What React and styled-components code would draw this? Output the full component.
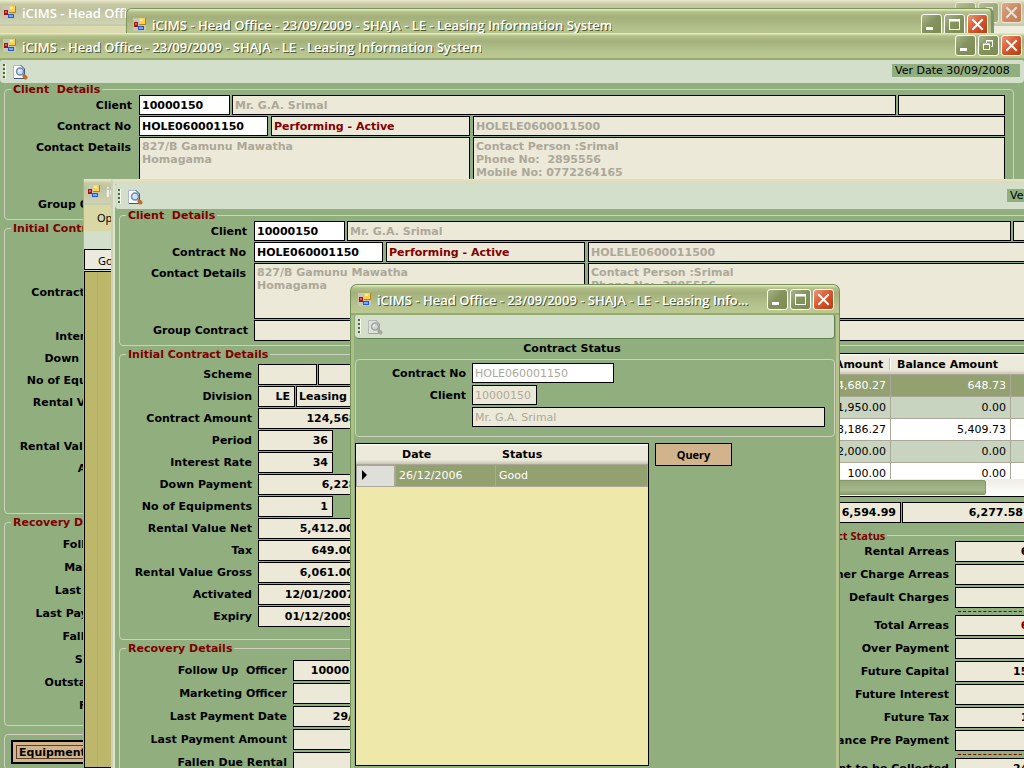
import React, { useId } from 'react';
import styled, { createGlobalStyle, css } from 'styled-components';

const wide = '"DejaVu Sans", Verdana, sans-serif';
const caption = '"Open Sans", "Trebuchet MS", sans-serif';
const narrow = '"Noto Sans", Tahoma, sans-serif';
const green = '#91ae7f';
const cream = '#ece9d8';
const line = '#d0d0bf';

const GlobalStyle = createGlobalStyle`
  *, *::before, *::after { box-sizing: border-box; }
  body { margin: 0; background: ${green}; font: 11px/13px ${wide}; color: #000; }
  input, textarea, button, table { font: inherit; color: inherit; }
`;

const Desktop = styled.div`
  position: relative;
  height: 100vh;
  overflow: hidden;
`;

/* Windows on the desktop */
const Window = styled.section`
  position: absolute;
  display: flex;
  flex-direction: column;
  left: ${(p) => p.$x}px;
  top: ${(p) => p.$y}px;
  width: ${(p) => p.$w || '100%'};
  bottom: 0;
  background: ${(p) => p.$bg || green};
`;

const BackWindow = styled(Window)`
  background: linear-gradient(90deg, #dad8aa, #efeede);
`;

const PopWindow = styled(Window)`
  width: auto;
  right: 30px;
  overflow: hidden;
  border-radius: 6px 6px 0 0;
  border: 1px solid #80955c;
  border-right: 3px solid #7d9466;
`;

const MenuWindow = styled(Window)`
  border-left: 1px solid #a9b38b;
`;

const InnerWindow = styled(Window)`
  border-left: 2px solid #c9d1b4;
  border-top: 2px solid #e0e1c3;

  &::before {
    content: '';
    height: 3px;
    flex: none;
    background: #dcdcbd;
  }
`;

const InnerBody = styled.div`
  display: flex;
  flex-direction: column;
  border-left: 2px solid #dee3cc;
`;

const DialogWindow = styled(Window)`
  border-radius: 7px 7px 0 0;
  overflow: hidden;
  border: 1px solid #74905a;
  border-bottom: 0;
`;

const DialogBody = styled.div`
  flex: 1;
  min-height: 0;
  display: flex;
  flex-direction: column;
  border-left: 3px solid #adc084;
  border-right: 3px solid #b5c48a;
  padding: 0 1px 2px 1px;
`;

const TitleBar = styled.header`
  flex: none;
  display: flex;
  align-items: center;
  height: ${(p) => p.$h || 27}px;
  padding: 0 ${(p) => p.$pr || 2}px 0 ${(p) => p.$pl || 3}px;
  gap: 6px;
  border-bottom: 2px solid #95ab70;
  background: linear-gradient(#e9f1c6 0, #b3c088 3px, #a3b07c 8px, #b4c28d 70%, #bcc992 100%);
  ${(p) =>
    p.$faded &&
    css`
      border-bottom-color: #c5cbab;
      background: linear-gradient(#ebebce 0, #c8c9a4 4px, #bfc3a1 9px, #d0d3b3 100%);
    `}
  > svg { flex: none; }
`;

const Title = styled.h1`
  flex: 0 1 auto;
  min-width: 0;
  max-width: ${(p) => (p.$cut ? `${p.$cut}px` : 'none')};
  margin: 0 8px 0 0;
  padding-top: 2px;
  overflow: hidden;
  white-space: nowrap;
  text-overflow: ${(p) => (p.$cut ? 'clip' : 'ellipsis')};
  font: 600 13px/20px ${caption};
  color: #fff;
  text-shadow: ${(p) => (p.$faded ? 'none' : '1px 1px 0 #4f5a2c')};
`;

const Controls = styled.div`
  display: flex;
  gap: 2px;
  margin-left: auto;
  opacity: ${(p) => (p.$faded ? 0.55 : 1)};
`;

const ControlButton = styled.button`
  width: 21px;
  height: 21px;
  padding: 0;
  border: 1px solid #fff;
  border-radius: 3px;
  background: ${(p) =>
    p.$close
      ? 'linear-gradient(135deg, #e8987a, #d8542c 50%, #b83c10)'
      : 'linear-gradient(135deg, #a9b58c, #84945f 45%, #7d8b50)'};

  svg { display: block; }
`;

const Toolbar = styled.div`
  flex: none;
  display: flex;
  align-items: center;
  gap: 5px;
  height: ${(p) => p.$h || 23}px;
  padding: 0 4px 0 3px;
  background: #d3dfcb;
  border-radius: 2px 2px 4px 4px;
  ${(p) => p.$shadow && 'border-bottom: 1px solid #5f8050; border-right: 1px solid #5f8050;'}
`;

const Grip = styled.span`
  width: 3px;
  height: 15px;
  background: repeating-linear-gradient(#4b6b3c 0 2px, transparent 2px 4px);
  border-right: 1px solid #f4f8f0;
`;

const ToolButton = styled.button`
  width: 18px;
  height: 18px;
  padding: 1px;
  border: 0;
  background: none;
  svg { display: block; }
`;

const Version = styled.output`
  width: 128px;
  margin: 0 0 3px auto;
  padding: 0 3px;
  white-space: nowrap;
  background: ${green};
`;

/* Form parts */
const Form = styled.form`
  display: flex;
  flex-direction: column;
  gap: 2px;
  padding: 0 10px 0 4px;
  background: ${green};
`;

const Group = styled.fieldset`
  min-width: 0;
  margin: 0;
  padding: ${(p) => p.$pad || '0'};
  border: 1px solid ${line};
  border-radius: 4px;
`;

const Legend = styled.legend`
  margin-left: 6px;
  padding: 2px 2px 0;
  line-height: 10px;
  white-space: pre;
  font-weight: bold;
  color: #800000;
  ${(p) => p.$narrow && `font-family: ${narrow};`}
`;

const Rows = styled.div`
  display: flex;
  flex-direction: column;
  gap: ${(p) => p.$gap || 1}px;
`;

const Row = styled.div`
  display: flex;
  gap: ${(p) => p.$gap || 1}px;
  height: ${(p) => p.$h || 21}px;
`;

const Label = styled.label`
  flex: none;
  width: ${(p) => p.$w}px;
  padding-right: 6px;
  margin-right: -1px;
  line-height: 22px;
  text-align: right;
  font-weight: bold;
  white-space: pre;
`;

const boxStyle = css`
  display: block;
  min-width: 0;
  width: ${(p) => (p.$w ? `${p.$w}px` : 'auto')};
  flex: ${(p) => (p.$w ? 'none' : '1 1 0')};
  height: 100%;
  margin: 0;
  padding: 0 ${(p) => (p.$right ? 4 : 2)}px 0 2px;
  border: 1px solid #000;
  border-radius: 0;
  outline: 0;
  text-align: ${(p) => (p.$right ? 'right' : 'left')};
  background: ${(p) => (p.$white ? '#fff' : cream)};
  color: ${(p) => (p.$grey ? '#aca899' : p.$red ? '#800000' : '#000')};
  font-weight: ${(p) => (p.$plain ? 'normal' : 'bold')};
`;

const Field = styled.input`${boxStyle}`;

const Area = styled.textarea`
  ${boxStyle}
  padding-top: 2px;
  resize: none;
  overflow: hidden;
`;

const Columns = styled.div`
  display: grid;
  grid-template-columns: 396px 1fr;
  gap: 6px;
`;

const Column = styled.div`
  display: flex;
  flex-direction: column;
  gap: 2px;
  min-width: 0;
`;

const RightColumn = styled(Column)`
  padding-top: 5px;
  gap: 5px;
`;

const Dashes = styled.hr`
  width: 150px;
  margin: 1px 0 1px 166px;
  border: 0;
  border-top: 1px dashed #800000;
`;

const StatusGroup = styled(Group)`
  margin: 1px 0 0 270px;
`;

const ButtonGroup = styled(Group)`
  margin-top: 6px;
  padding: 5px 6px;
`;

const Command = styled.button`
  padding: 0 6px;
  font-weight: bold;
  border: 1px solid #000;
  border-radius: 0;
  background: #d2b48c;
`;

const FocusedCommand = styled(Command)`
  height: 24px;
  border-width: 2px;
  outline: 1px solid #5a452a;
  outline-offset: -6px;
`;

const QueryCommand = styled(Command)`
  width: 77px;
  height: 23px;
  font-family: ${narrow};
`;

/* Data grids */
const GridBox = styled.div`
  display: flex;
  flex-direction: column;
  overflow: hidden;
  height: ${(p) => (p.$h ? `${p.$h}px` : 'auto')};
  width: ${(p) => (p.$w ? `${p.$w}px` : 'auto')};
  border: 1px solid #000;
  background: ${(p) => p.$bg || '#fff'};
`;

const GridClip = styled.div`
  flex: 1;
  overflow: hidden;
`;

const Table = styled.table`
  width: 100%;
  table-layout: fixed;
  border-collapse: separate;
  border-spacing: 0;
`;

const Head = styled.th`
  position: relative;
  width: ${(p) => (p.$w ? `${p.$w}px` : 'auto')};
  height: 21px;
  padding: 0 6px;
  text-align: left;
  font-weight: bold;
  white-space: nowrap;
  background: linear-gradient(#fff 0, #edeadb 2px, #ebe9da 16px, #c9c5b2 100%);
  border-bottom: 1px solid #aca899;

  & + &::before {
    content: '';
    position: absolute;
    left: -2px;
    top: 4px;
    width: 2px;
    height: 12px;
    background: linear-gradient(90deg, #c2bfac 50%, #fff 50%);
  }
`;

const Cell = styled.td`
  height: 22px;
  padding: 0 4px 0 3px;
  text-align: ${(p) => (p.$left ? 'left' : 'right')};
  border-right: 1px solid #aca899;
  border-bottom: 1px solid #aca899;
`;

const Line = styled.tr`
  background: ${(p) => (p.$on ? '#93a070' : p.$alt ? '#c8d4c0' : '#fff')};
  color: ${(p) => (p.$on ? '#fff' : '#000')};
`;

const Marker = styled.td`
  padding: 0 0 3px 4px;
  background: #dedfd9;
  border: 1px solid #aca899;
  border-width: 1px 2px 1px 1px;
  svg { display: block; }
`;

const Scroll = styled.div`
  height: 17px;
  padding: 1px 0;
  background: linear-gradient(#eeede5, #fff);
`;

const Thumb = styled.div`
  width: 464px;
  height: 15px;
  border: 1px solid #849966;
  border-radius: 2px;
  background: linear-gradient(#93a97a, #a5b78c 70%, #8ba06f);
`;

const DialogHeading = styled.h2`
  margin: 0;
  padding-right: 46px;
  text-align: center;
  font: bold 11px/20px ${wide};
`;

const DialogGroup = styled(Group)`
  flex: none;
  padding: 3px 9px 9px 0;
`;

const DialogGrid = styled.div`
  flex: 1;
  min-height: 0;
  display: flex;
  align-items: stretch;
  gap: 6px;
  padding-top: 6px;
`;

const Menu = styled.nav`
  height: 26px;
  padding: 6px 13px;
  background: #d9d8a5;
`;

const MenuLink = styled.a`
  color: #000;
  text-decoration: none;
  font-family: ${narrow};
`;

const GoBar = styled.div`
  margin-top: 18px;
  height: 21px;
  padding: 4px 13px;
  border: 1px solid #000;
  background: #ece9dd;
  font-family: ${narrow};
`;

const Canvas = styled.div`
  flex: 1;
  margin-top: 1px;
  padding-left: 12px;
  border: 1px solid #000;
  background: #bdb76b;

  &::before {
    content: '';
    display: block;
    height: 100%;
    border-left: 1px dotted #a8a58c;
  }
`;

const MenuBody = styled.div`
  flex: 1;
  display: flex;
  flex-direction: column;
  background: #d3dfcb;
`;

function AppIcon() {
  return (
    <svg width="13" height="13" viewBox="0 0 13 13" aria-hidden="true">
      <rect width="13" height="13" fill="#c5c8b4" />
      <rect x="6" y="0" width="7" height="7" fill="#b88312" />
      <rect x="6" y="0" width="6" height="6" fill="#fcd050" />
      <rect x="7" y="1" width="3" height="2" fill="#ffeaa0" />
      <rect x="1" y="4" width="4" height="5" fill="#a11414" />
      <rect x="2" y="5" width="2" height="2" fill="#e65a48" />
      <rect x="5" y="8" width="6" height="4" fill="#2858c8" />
      <rect x="6" y="9" width="4" height="2" fill="#78a8f8" />
    </svg>
  );
}

function PreviewIcon({ grey }) {
  const c = grey
    ? { page: '#dde2db', edge: '#b4b9b4', side: '#a0a5a0', lens: '#d0d5d0', ring: '#a0a5a0', handle: '#a4a9a4' }
    : { page: '#fff', edge: '#a9b6d6', side: '#44527c', lens: '#c4e2f8', ring: '#7787a8', handle: '#b8702a' };
  return (
    <svg width="16" height="16" viewBox="0 0 16 16" aria-hidden="true">
      <path d="M1.500 1.500h7.500l3.500 3.500V14.500H1.500z" fill={c.page} stroke={c.edge} />
      <path d="M8.500 1l4 4v6M2 14.500h10" fill="none" stroke={c.side} />
      <circle cx="8" cy="7.500" r="3.500" fill={c.lens} stroke={c.ring} strokeWidth="1.500" />
      <path d="M6.500 7.500a1.500 1.500 0 0 1 1.500-1.500" fill="none" stroke="#fff" />
      <path d="M10.500 10l1.500 1.500" stroke={c.ring} strokeWidth="2" />
      <path d="M12.500 12.500l1 1" stroke={c.handle} strokeWidth="4" strokeLinecap="round" />
    </svg>
  );
}

function WindowControls({ faded, restore }) {
  return (
    <Controls $faded={faded}>
      <ControlButton type="button" aria-label="Minimize">
        <svg width="19" height="19"><rect x="4" y="12" width="7" height="3" fill="#fff" /></svg>
      </ControlButton>
      <ControlButton type="button" aria-label={restore ? 'Restore' : 'Maximize'}>
        {restore ? (
          <svg width="19" height="19" fill="none" stroke="#fff">
            <path d="M7.500 7V4.500h6v6H12" />
            <path d="M7 5h7" />
            <rect x="4.500" y="8.500" width="6" height="5" />
            <path d="M4 8h7" />
          </svg>
        ) : (
          <svg width="19" height="19" fill="none" stroke="#fff">
            <rect x="4.500" y="4.500" width="10" height="10" />
            <path d="M4 5.500h11" strokeWidth="2" />
          </svg>
        )}
      </ControlButton>
      <ControlButton type="button" aria-label="Close" $close>
        <svg width="19" height="19"><path d="M5 5l9 9M14 5l-9 9" stroke="#fff" strokeWidth="2" strokeLinecap="square" /></svg>
      </ControlButton>
    </Controls>
  );
}

const TITLE = 'iCIMS - Head Office - 23/09/2009 - SHAJA - LE - Leasing Information System';

function Caption({ faded, restore, cut, ...bar }) {
  return (
    <TitleBar $faded={faded} {...bar}>
      <AppIcon />
      <Title $faded={faded} $cut={cut}>{TITLE}</Title>
      <WindowControls faded={faded} restore={restore} />
    </TitleBar>
  );
}

function Tools({ grey, shadow, version, height }) {
  return (
    <Toolbar $shadow={shadow} $h={height}>
      <Grip />
      <ToolButton type="button" aria-label="Preview" disabled={grey}><PreviewIcon grey={grey} /></ToolButton>
      {version && <Version>Ver Date 30/09/2008</Version>}
    </Toolbar>
  );
}

const initialRows = [
  ['Contract Amount', '124,568.00', 123],
  ['Period', '36', 75],
  ['Interest Rate', '34', 75],
  ['Down Payment', '6,228.00', 123],
  ['No of Equipments', '1', 75],
  ['Rental Value Net', '5,412.00', 101],
  ['Tax', '649.00', 101],
  ['Rental Value Gross', '6,061.00', 101],
  ['Activated', '12/01/2007', 101],
  ['Expiry', '01/12/2009', 101],
];

const recoveryRows = [
  ['Follow Up  Officer', '10000115', 84],
  ['Marketing Officer', '', 84],
  ['Last Payment Date', '29/08/2009', 114],
  ['Last Payment Amount', '', 114],
  ['Fallen Due Rental', '', 114],
  ['Settled Amount', '', 114],
  ['Outstanding Rentals', '', 114],
  ['Future Amount', '', 114],
];

const statusRows = [
  ['Rental Arreas', '6,058.73'],
  ['Other Charge Arreas', ''],
  ['Default Charges', ''],
  null,
  ['Total Arreas', '6,058.73', true],
  ['Over Payment', ''],
  ['Future Capital', '15,214.00'],
  ['Future Interest', ''],
  ['Future Tax', '1,947.00'],
  ['Balance Pre Payment', ''],
  null,
  ['Amount to be Collected', '24,120.00'],
];

const ledger = [
  ['4,680.27', '648.73'],
  ['1,950.00', '0.00'],
  ['3,186.27', '5,409.73'],
  ['2,000.00', '0.00'],
  ['100.00', '0.00'],
];

function LabelledRow({ id, name, value, labelWidth, width, red }) {
  return (
    <Row>
      <Label htmlFor={id} $w={labelWidth}>{name}</Label>
      <Field id={id} defaultValue={value} $w={width} $right $red={red} />
    </Row>
  );
}

function ContractForm() {
  const id = useId();
  return (
    <Form>
      <Group $pad="0 8px 4px 0">
        <Legend>{'Client  Details'}</Legend>
        <Rows>
          <Row $h={20} $gap={2}>
            <Label htmlFor={`${id}client`} $w={133}>Client</Label>
            <Field id={`${id}client`} defaultValue="10000150" $w={91} $white />
            <Field aria-label="Client name" defaultValue="Mr. G.A. Srimal" $grey />
            <Field aria-label="Client type" $w={107} />
          </Row>
          <Row $h={20} $gap={3}>
            <Label htmlFor={`${id}no`} $w={132}>Contract No</Label>
            <Field id={`${id}no`} defaultValue="HOLE060001150" $w={129} $white />
            <Field aria-label="Contract state" defaultValue="Performing - Active" $w={199} $red />
            <Field aria-label="Reference" defaultValue="HOLELE0600011500" $grey />
          </Row>
          <Row $h={56} $gap={3}>
            <Label htmlFor={`${id}contact`} $w={132}>Contact Details</Label>
            <Area id={`${id}contact`} defaultValue={'827/B Gamunu Mawatha\nHomagama'} $w={331} $grey />
            <Area
              aria-label="Contact person"
              defaultValue={'Contact Person :Srimal\nPhone No:  2895556\nMobile No: 0772264165'}
              $grey
            />
          </Row>
          <Row>
            <Label htmlFor={`${id}group`} $w={134}>Group Contract</Label>
            <Field id={`${id}group`} />
          </Row>
        </Rows>
      </Group>
      <Columns>
        <Column>
          <Group $pad="4px 8px 12px 0">
            <Legend>Initial Contract Details</Legend>
            <Rows>
              <Row>
                <Label htmlFor={`${id}scheme`} $w={138}>Scheme</Label>
                <Field id={`${id}scheme`} $w={59} />
                <Field aria-label="Scheme name" />
              </Row>
              <Row>
                <Label htmlFor={`${id}division`} $w={138}>Division</Label>
                <Field id={`${id}division`} defaultValue="LE" $w={37} $right />
                <Field aria-label="Division name" defaultValue="Leasing" />
              </Row>
              {initialRows.map(([name, value, width]) => (
                <LabelledRow key={name} id={id + name} name={name} value={value} width={width} labelWidth={138} />
              ))}
            </Rows>
          </Group>
          <Group $pad="6px 8px 9px 0">
            <Legend>Recovery Details</Legend>
            <Rows $gap={2}>
              {recoveryRows.map(([name, value, width]) => (
                <LabelledRow key={name} id={id + name} name={name} value={value} width={width} labelWidth={173} />
              ))}
            </Rows>
          </Group>
          <ButtonGroup>
            <FocusedCommand type="button">Equipments</FocusedCommand>
          </ButtonGroup>
        </Column>
        <RightColumn>
          <GridBox $h={144}>
            <GridClip>
              <Table>
                <thead>
                  <tr>
                    <Head $w={129}>Description</Head>
                    <Head $w={120}>Due Amount</Head>
                    <Head $w={120}>Payment Amount</Head>
                    <Head $w={120}>Balance Amount</Head>
                    <Head aria-label="Remarks" />
                  </tr>
                </thead>
                <tbody>
                  {ledger.map(([paid, balance], i) => (
                    <Line key={paid} $on={i === 0} $alt={i % 2 === 1}>
                      <Cell />
                      <Cell />
                      <Cell>{paid}</Cell>
                      <Cell>{balance}</Cell>
                      <Cell />
                    </Line>
                  ))}
                </tbody>
              </Table>
            </GridClip>
            <Scroll><Thumb /></Scroll>
          </GridBox>
          <Row>
            <Field aria-label="Total due" $w={249} $right />
            <Field aria-label="Total settled" defaultValue="6,594.99" $w={130} $right />
            <Field aria-label="Total balance" defaultValue="6,277.58" $w={126} $right />
          </Row>
          <StatusGroup $pad="0 0 10px 0">
            <Legend $narrow>Contract Status</Legend>
            <Rows $gap={2}>
              {statusRows.map((row, i) =>
                row ? (
                  <LabelledRow key={row[0]} id={id + row[0]} name={row[0]} value={row[1]} red={row[2]} width={125} labelWidth={163} />
                ) : (
                  <Dashes key={i} />
                )
              )}
            </Rows>
          </StatusGroup>
        </RightColumn>
      </Columns>
    </Form>
  );
}

function StatusDialog() {
  return (
    <DialogWindow as="div" role="dialog" aria-label="Contract Status" $x={350} $y={284} $w="490px">
      <Caption $h={30} $pl={7} $pr={5} />
      <DialogBody>
        <Tools grey shadow height={24} />
        <DialogHeading>Contract Status</DialogHeading>
        <DialogGroup>
          <Rows $gap={2}>
            <Row $h={20}>
              <Label htmlFor="dlg-contract" $w={116}>Contract No</Label>
              <Field id="dlg-contract" defaultValue="HOLE060001150" $w={142} $white $grey $plain />
            </Row>
            <Row $h={20}>
              <Label htmlFor="dlg-client" $w={116}>Client</Label>
              <Field id="dlg-client" defaultValue="10000150" $w={65} $grey $plain />
            </Row>
            <Row $h={20}>
              <Label as="span" $w={116} />
              <Field aria-label="Client name" defaultValue="Mr. G.A. Srimal" $grey $plain />
            </Row>
          </Rows>
        </DialogGroup>
        <DialogGrid>
          <GridBox $w={294} $bg="#eee8aa">
            <Table>
              <thead>
                <tr>
                  <Head $w={40} aria-label="Selected" />
                  <Head $w={100}>Date</Head>
                  <Head>Status</Head>
                </tr>
              </thead>
              <tbody>
                <Line $on>
                  <Marker>
                    <svg width="6" height="10"><path d="M1 0l5 5-5 5z" /></svg>
                  </Marker>
                  <Cell $left>26/12/2006</Cell>
                  <Cell $left>Good</Cell>
                </Line>
              </tbody>
            </Table>
          </GridBox>
          <QueryCommand type="button">Query</QueryCommand>
        </DialogGrid>
      </DialogBody>
    </DialogWindow>
  );
}

export default function App() {
  return (
    <>
      <GlobalStyle />
      <Desktop>
        <BackWindow $x={0} $y={0}>
          <Caption faded restore cut={104} $h={26} />
        </BackWindow>
        <PopWindow $x={126} $y={8}>
          <Caption $h={32} $pl={6} $pr={3} />
        </PopWindow>
        <Window $x={0} $y={33}>
          <Caption restore />
          <Tools version />
          <ContractForm />
        </Window>
        <MenuWindow $x={83} $y={179}>
          <Caption faded $h={26} />
          <MenuBody>
            <Menu><MenuLink href="#options">Options</MenuLink></Menu>
            <GoBar>Go To</GoBar>
            <Canvas />
          </MenuBody>
        </MenuWindow>
        <InnerWindow $x={111} $y={179} $w="calc(100% + 4px)">
          <InnerBody>
            <Tools version height={25} />
            <ContractForm />
          </InnerBody>
        </InnerWindow>
        <StatusDialog />
      </Desktop>
    </>
  );
}
